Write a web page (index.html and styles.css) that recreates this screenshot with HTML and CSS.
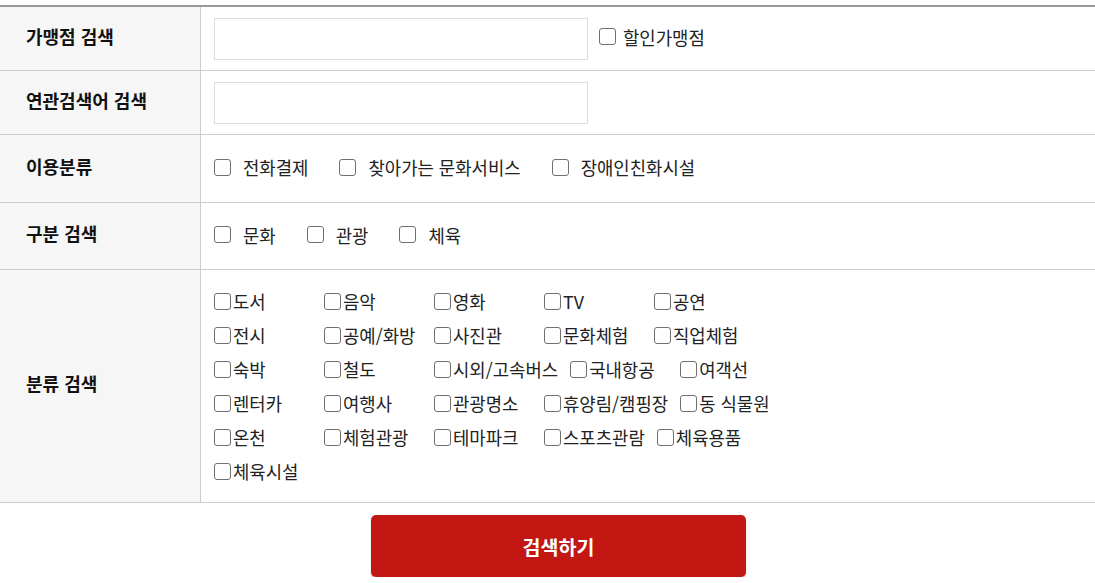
FILE: index.html
```html
<!DOCTYPE html>
<html lang="ko">
<head>
<meta charset="utf-8">
<title>가맹점 검색</title>
<link rel="stylesheet" href="styles.css">
</head>
<body>
<div class="page">
  <div class="search-table">
    <div class="row row-input">
      <div class="label">가맹점 검색</div>
      <div class="cell">
        <input class="text-input" type="text">
        <label class="chk chk-inline"><input type="checkbox" class="cb"><span>할인가맹점</span></label>
      </div>
    </div>
    <div class="row row-input">
      <div class="label">연관검색어 검색</div>
      <div class="cell">
        <input class="text-input" type="text">
      </div>
    </div>
    <div class="row row-opt">
      <div class="label">이용분류</div>
      <div class="cell">
        <label class="chk chk-wide"><input type="checkbox" class="cb"><span>전화결제</span></label>
        <label class="chk chk-wide"><input type="checkbox" class="cb"><span>찾아가는 문화서비스</span></label>
        <label class="chk chk-wide"><input type="checkbox" class="cb"><span>장애인친화시설</span></label>
      </div>
    </div>
    <div class="row row-opt2">
      <div class="label">구분 검색</div>
      <div class="cell">
        <label class="chk chk-wide"><input type="checkbox" class="cb"><span>문화</span></label>
        <label class="chk chk-wide"><input type="checkbox" class="cb"><span>관광</span></label>
        <label class="chk chk-wide"><input type="checkbox" class="cb"><span>체육</span></label>
      </div>
    </div>
    <div class="row row-grid">
      <div class="label">분류 검색</div>
      <div class="cell">
        <div class="grid">
          <label class="chk chk-item"><input type="checkbox" class="cb"><span>도서</span></label>
          <label class="chk chk-item"><input type="checkbox" class="cb"><span>음악</span></label>
          <label class="chk chk-item"><input type="checkbox" class="cb"><span>영화</span></label>
          <label class="chk chk-item"><input type="checkbox" class="cb"><span>TV</span></label>
          <label class="chk chk-item"><input type="checkbox" class="cb"><span>공연</span></label>
          <label class="chk chk-item"><input type="checkbox" class="cb"><span>전시</span></label>
          <label class="chk chk-item"><input type="checkbox" class="cb"><span>공예/화방</span></label>
          <label class="chk chk-item"><input type="checkbox" class="cb"><span>사진관</span></label>
          <label class="chk chk-item"><input type="checkbox" class="cb"><span>문화체험</span></label>
          <label class="chk chk-item"><input type="checkbox" class="cb"><span>직업체험</span></label>
          <label class="chk chk-item"><input type="checkbox" class="cb"><span>숙박</span></label>
          <label class="chk chk-item"><input type="checkbox" class="cb"><span>철도</span></label>
          <label class="chk chk-item"><input type="checkbox" class="cb"><span>시외/고속버스</span></label>
          <label class="chk chk-item"><input type="checkbox" class="cb"><span>국내항공</span></label>
          <label class="chk chk-item"><input type="checkbox" class="cb"><span>여객선</span></label>
          <label class="chk chk-item"><input type="checkbox" class="cb"><span>렌터카</span></label>
          <label class="chk chk-item"><input type="checkbox" class="cb"><span>여행사</span></label>
          <label class="chk chk-item"><input type="checkbox" class="cb"><span>관광명소</span></label>
          <label class="chk chk-item"><input type="checkbox" class="cb"><span>휴양림/캠핑장</span></label>
          <label class="chk chk-item"><input type="checkbox" class="cb"><span>동 식물원</span></label>
          <label class="chk chk-item"><input type="checkbox" class="cb"><span>온천</span></label>
          <label class="chk chk-item"><input type="checkbox" class="cb"><span>체험관광</span></label>
          <label class="chk chk-item"><input type="checkbox" class="cb"><span>테마파크</span></label>
          <label class="chk chk-item"><input type="checkbox" class="cb"><span>스포츠관람</span></label>
          <label class="chk chk-item"><input type="checkbox" class="cb"><span>체육용품</span></label>
          <label class="chk chk-item"><input type="checkbox" class="cb"><span>체육시설</span></label>
        </div>
      </div>
    </div>
  </div>
  <div class="actions">
    <button class="search-btn" type="button">검색하기</button>
  </div>
</div>
</body>
</html>
```
FILE: styles.css
```css
* { box-sizing: border-box; }
html, body { margin: 0; padding: 0; background: #fff; }
body {
  font-family: "Noto Sans CJK KR", "Noto Sans", sans-serif;
  color: #222;
  font-size: 17.8px;
}
.page { padding-top: 5px; }
.search-table {
  border-top: 2px solid #999;
}
.row {
  display: flex;
  border-bottom: 1px solid #ccc;
}
.label {
  width: 201px;
  flex: none;
  background: #f6f6f6;
  border-right: 1px solid #ccc;
  padding-left: 26px;
  padding-bottom: 6px;
  display: flex;
  align-items: center;
  font-weight: 700;
  font-size: 18px;
  color: #111;
  line-height: 22px;
}
.cell {
  flex: 1;
  display: flex;
  align-items: center;
  padding-left: 13px;
}
.row-input { height: 64px; }
.row-input .cell { padding-top: 1px; }
.row-opt { height: 68px; }
.row-opt2 { height: 67px; }
.row-opt .cell, .row-opt2 .cell { padding-bottom: 3px; }
.row-grid .cell { padding: 19px 0 19px 10px; align-items: flex-start; }
.text-input {
  width: 374px;
  height: 42px;
  border: 1px solid #ddd;
  background: #fff;
  margin: 0;
  padding: 0 10px;
  font: inherit;
}
.chk {
  display: inline-flex;
  align-items: center;
  line-height: 24px;
  color: #222;
  white-space: nowrap;
}
.cb {
  appearance: none;
  -webkit-appearance: none;
  width: 17px;
  height: 17px;
  margin: 0;
  border: 1px solid #707070;
  border-radius: 3px;
  background: #fff;
  flex: none;
}
.chk-inline { margin-left: 11px; margin-bottom: 5px; }
.chk-inline .cb { margin-right: 7px; }
.chk-wide { margin-right: 31px; }
.chk-wide .cb { margin-right: 12px; }
.grid {
  display: flex;
  flex-wrap: wrap;
  row-gap: 10px;
  width: 600px;
}
.chk-item {
  min-width: 101px;
  margin-right: 9px;
  height: 24px;
}
.chk-item .cb { margin-left: 3px; margin-right: 2px; }
.actions {
  display: flex;
  justify-content: center;
  padding-top: 12px;
}
.search-btn {
  width: 375px;
  height: 62px;
  margin-left: 22px;
  background: #c21713;
  color: #fff;
  border: 0;
  border-radius: 5px;
  box-shadow: 0 2px 2px rgba(0,0,0,0.22);
  font-family: "Noto Sans CJK KR", "Noto Sans", sans-serif;
  font-weight: 700;
  font-size: 19.5px;
  cursor: pointer;
}
```
